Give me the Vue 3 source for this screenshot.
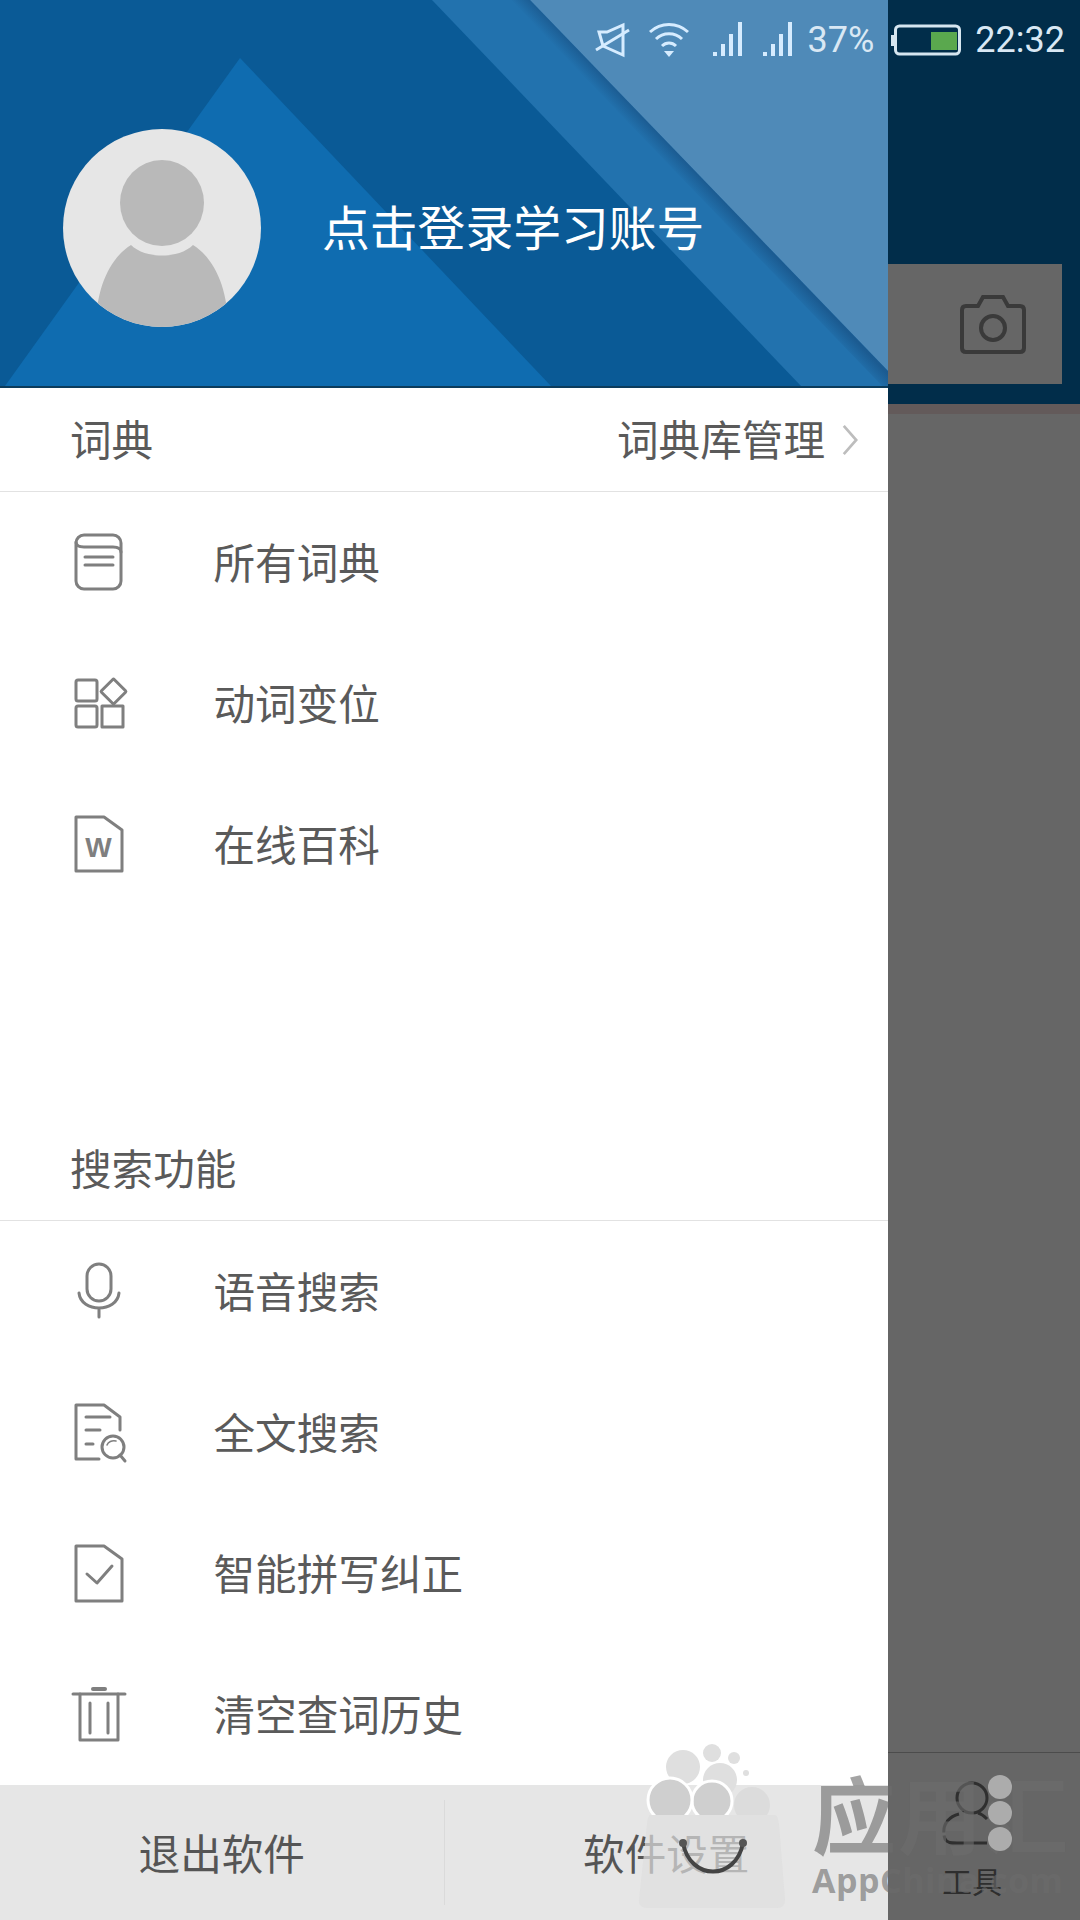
<script setup>
const dict = [
  { label: '所有词典', icon: 'book' },
  { label: '动词变位', icon: 'grid' },
  { label: '在线百科', icon: 'wiki' }
]
const search = [
  { label: '语音搜索', icon: 'mic' },
  { label: '全文搜索', icon: 'find' },
  { label: '智能拼写纠正', icon: 'check' },
  { label: '清空查词历史', icon: 'trash' }
]
</script>

<template>
  <div class="page">
    <aside class="drawer">
      <header class="hero">
        <svg class="hero-art" viewBox="0 0 888 386" width="888" height="386">
          <defs>
            <linearGradient id="shade" gradientUnits="userSpaceOnUse" x1="700.6" y1="177" x2="689" y2="188">
              <stop offset="0" stop-color="#1a578c" stop-opacity=".85" />
              <stop offset="1" stop-color="#1a578c" stop-opacity="0" />
            </linearGradient>
          </defs>
          <rect width="888" height="386" fill="#0a5a96" />
          <polygon points="240,58 551,386 5,386" fill="#0f6cb0" />
          <polygon points="432,0 888,0 888,386 801,386" fill="#2272ae" />
          <polygon points="530,0 888,0 888,371" fill="#4f8ab8" />
          <polygon points="530,0 888,371 888,392 510,0" fill="url(#shade)" />
        </svg>
        <div class="avatar">
          <svg viewBox="0 0 198 198" width="198" height="198">
            <defs><clipPath id="disc"><circle cx="99" cy="99" r="99" /></clipPath></defs>
            <circle cx="99" cy="99" r="99" fill="#e6e6e6" />
            <g clip-path="url(#disc)">
              <ellipse cx="99" cy="74" rx="42" ry="43" fill="#b9b9b9" />
              <path d="M33 198 C33 160 46 130 68 116 C82 130 116 130 130 116 C152 130 165 160 165 198 Z" fill="#b9b9b9" />
            </g>
          </svg>
        </div>
        <span class="login">点击登录学习账号</span>
      </header>

      <div class="section-head">
        <span class="lift">词典</span>
        <span class="manage"><span class="lift">词典库管理</span>
          <svg viewBox="0 0 20 36" width="18" height="32"><path d="M3 2 L17 18 L3 34" fill="none" stroke="#bdbdbd" stroke-width="3" /></svg>
        </span>
      </div>
      <ul class="list">
        <li v-for="item in dict" :key="item.label" class="row">
          <svg class="ico" viewBox="0 0 60 60" width="60" height="60">
            <g v-if="item.icon === 'book'">
              <rect x="6" y="2" width="45" height="54" rx="8" />
              <path d="M6 9 C6 13 10 14 14 14 H43 C47 14 51 15 51 19" />
              <path d="M15 24 H43 M15 32 H43" />
            </g>
            <g v-else-if="item.icon === 'grid'">
              <rect x="6" y="6" width="21" height="21" rx="2" />
              <rect x="6" y="32" width="21" height="21" rx="2" />
              <rect x="32" y="32" width="21" height="21" />
              <rect x="34.5" y="8.5" width="18" height="18" transform="rotate(45 43.5 17.5)" rx="1" />
            </g>
            <g v-else>
              <path d="M6 2 H34 L52 15 V56 H6 Z" />
              <text class="ico-w" x="28.5" y="42" text-anchor="middle">W</text>
            </g>
          </svg>
          <span class="lift">{{ item.label }}</span>
        </li>
      </ul>

      <div class="section-head second"><span class="lift">搜索功能</span></div>
      <ul class="list">
        <li v-for="item in search" :key="item.label" class="row">
          <svg class="ico" viewBox="0 0 60 60" width="60" height="60">
            <g v-if="item.icon === 'mic'">
              <rect x="17" y="2" width="24" height="37" rx="12" />
              <path d="M9 31 C11 51 47 51 49 31 M29 46 V55" />
            </g>
            <g v-else-if="item.icon === 'find'">
              <path d="M29 56 H6 V2 H34 L50 14 V27" />
              <path d="M16 14 H40 M16 27 H30 M16 41 H23" />
              <circle cx="43" cy="44" r="11" />
              <path d="M37 42 C38 39 42 37 46 38" stroke-width="1.5" />
              <path d="M50 52 L55 58" />
            </g>
            <g v-else-if="item.icon === 'check'">
              <path d="M6 2 H34 L52 15 V57 H6 Z" />
              <path d="M17 30 L27 39 L42 22" />
            </g>
            <g v-else>
              <path d="M3 9 H55" />
              <path d="M23 4 H35" stroke-width="4" />
              <path d="M10 9 V55 H48 V9 M20 18 V48 M38 18 V48" />
            </g>
          </svg>
          <span class="lift">{{ item.label }}</span>
        </li>
      </ul>

      <footer class="actions">
        <button class="action">退出软件</button>
        <i class="split"></i>
        <button class="action">软件设置</button>
      </footer>
    </aside>

    <div class="scrim">
      <div class="backdrop-bar">
        <div class="camera">
          <svg viewBox="0 0 66 64" width="66" height="64" fill="none" stroke="#3a3a3a" stroke-width="4">
            <path d="M6 14 H18 L23 5 H43 L48 14 H60 Q64 14 64 18 V56 Q64 60 60 60 H6 Q2 60 2 56 V18 Q2 14 6 14 Z" />
            <circle cx="33" cy="36" r="12" />
          </svg>
        </div>
      </div>
      <div class="backdrop-fill"></div>
      <nav class="tab">
        <svg viewBox="0 0 70 70" width="70" height="70" fill="none" stroke="#2f2f2f" stroke-width="3">
          <circle cx="35" cy="15" r="15" />
          <path d="M22 31 C10 34 4 44 8 56 C10 60 14 60 20 60" stroke-dasharray="26 3" />
          <path d="M20 60 L50 60" />
          <path d="M41 30 C45 31 48 34 50 36" />
        </svg>
        <span>工具</span>
      </nav>
    </div>

    <div class="status">
      <svg viewBox="0 0 36 36" width="36" height="36" fill="none" stroke="#d6ecff" stroke-width="3">
        <path d="M4 10 H12 L28 3 V33 L8 24 Z" />
        <path d="M1 28 L34 8" />
      </svg>
      <svg class="wifi" viewBox="0 0 42 36" width="42" height="36" fill="none" stroke="#d6ecff" stroke-width="3">
        <path d="M2 10 C13 0 29 0 40 10 M8 17 C15 10 27 10 34 17 M14 24 C18 20 24 20 28 24" />
        <path d="M21 35 L16 29 H26 Z" fill="#d6ecff" stroke="none" />
      </svg>
      <svg class="sig" viewBox="0 0 30 36" width="30" height="36" fill="#d6ecff">
        <rect x="0" y="30" width="4" height="4" /><rect x="8" y="22" width="4" height="12" /><rect x="16" y="12" width="4" height="22" /><rect x="25" y="0" width="4" height="34" />
      </svg>
      <svg class="sig two" viewBox="0 0 30 36" width="30" height="36" fill="#d6ecff">
        <rect x="0" y="30" width="4" height="4" /><rect x="8" y="22" width="4" height="12" /><rect x="16" y="12" width="4" height="22" /><rect x="25" y="0" width="4" height="34" />
      </svg>
      <span class="pct">37%</span>
      <svg class="batt" viewBox="0 0 70 32" width="70" height="32">
        <rect x="0" y="11" width="3" height="11" fill="#d6e6f0" />
        <rect x="4.5" y="2" width="64" height="28" rx="4" fill="none" stroke="#d6e6f0" stroke-width="3" />
        <rect x="40" y="8" width="26" height="18" fill="#5aa84e" />
      </svg>
      <span class="clock">22:32</span>
    </div>

    <div class="watermark">
      <svg class="bag" viewBox="0 0 160 190" width="160" height="190">
        <g fill="#dfdfdf">
          <circle cx="51" cy="37" r="17" />
          <circle cx="80" cy="23" r="9" />
          <circle cx="102" cy="28" r="6" />
          <circle cx="114" cy="43" r="3" />
          <circle cx="88" cy="50" r="17" />
        </g>
        <defs><clipPath id="above"><rect x="0" y="0" width="160" height="85" /></clipPath></defs>
        <g clip-path="url(#above)" stroke="#fff" stroke-width="3">
          <circle cx="120" cy="75" r="18" fill="#dcdcdc" stroke="none" />
          <circle cx="80" cy="71" r="20" fill="#cfcfcf" />
          <circle cx="38" cy="70" r="22" fill="#cfcfcf" />
        </g>
        <path d="M18 85 H143 Q146 85 147 95 L153 170 Q153 178 145 178 H16 Q6 178 7 170 L15 95 Q16 85 18 85 Z" fill="#dedede" opacity=".7" />
        <path d="M51 113 C58 151 104 151 111 113" fill="none" stroke="#444" stroke-width="4" />
        <circle cx="51" cy="113" r="4" fill="#555" />
        <circle cx="111" cy="113" r="4" fill="#555" />
      </svg>
      <div class="brand">
        <span class="brand-cn">应用汇</span>
        <span class="brand-en">AppChina.com</span>
      </div>
      <div class="dots"><i></i><i></i><i></i></div>
    </div>
  </div>
</template>

<style scoped>
.page {
  position: relative;
  width: 1080px;
  height: 1920px;
  display: flex;
  overflow: hidden;
  font-family: "Noto Sans CJK SC", "Liberation Sans", sans-serif;
  color: #5a5a5a;
}
.drawer {
  width: 888px;
  height: 1920px;
  display: flex;
  flex-direction: column;
  background: #fff;
}
.hero {
  position: relative;
  flex: none;
  display: flex;
  align-items: center;
  padding-left: 63px;
  box-sizing: border-box;
  border-bottom: 2px solid #0c3c5c;
  height: 388px;
}
.hero-art {
  position: absolute;
  left: 0;
  top: 0;
}
.avatar {
  position: relative;
  width: 198px;
  height: 198px;
  margin-top: 70px;
  flex: none;
}
.avatar svg { display: block; }
.login {
  position: relative;
  margin-left: 61px;
  margin-top: 66px;
  font-size: 47.8px;
  color: #fff;
  line-height: 1;
}
.section-head {
  height: 103px;
  flex: none;
  display: flex;
  align-items: center;
  justify-content: space-between;
  padding: 0 29px 0 70px;
  border-bottom: 1px solid #e2e2e2;
  font-size: 41.6px;
  line-height: 1;
}
.lift {
  margin-top: -1px;
}
.second {
  margin-top: 201px;
  height: 104px;
}
.manage {
  display: flex;
  align-items: center;
  gap: 16px;
}
.list {
  list-style: none;
  margin: 0;
  padding: 0;
}
.row {
  height: 141px;
  display: flex;
  align-items: center;
  padding-left: 70px;
  font-size: 41.6px;
  line-height: 1;
}
.ico {
  flex: none;
  margin-right: 83.5px;
  fill: none;
  stroke: #7f7f7f;
  stroke-width: 3;
  stroke-linejoin: round;
  stroke-linecap: round;
  overflow: visible;
}
.ico-w {
  fill: #7f7f7f;
  stroke: none;
  font-family: "Liberation Sans", sans-serif;
  font-size: 28px;
  font-weight: 700;
}
.actions {
  height: 135px;
  flex: none;
  display: flex;
  align-items: center;
  background: #e6e6e6;
}
.action {
  flex: 1;
  height: 135px;
  border: 0;
  padding: 0 0 2px;
  background: none;
  font: inherit;
  font-size: 41.6px;
  color: #555;
}
.split {
  width: 1px;
  height: 105px;
  background: #dadada;
}
.scrim {
  flex: 1;
  display: flex;
  flex-direction: column;
  background: #666;
}
.backdrop-bar {
  height: 404px;
  flex: none;
  background: #012d4a;
  padding-top: 264px;
  box-sizing: border-box;
}
.camera {
  width: 174px;
  height: 120px;
  background: #666;
  display: flex;
  align-items: center;
  justify-content: center;
  padding-left: 36px;
  box-sizing: border-box;
}
.backdrop-fill {
  flex: 1;
  border-top: 10px solid #635a5a;
  border-bottom: 1px solid #4c4c4c;
}
.tab {
  height: 167px;
  flex: none;
  display: flex;
  flex-direction: column;
  align-items: center;
  padding-top: 30px;
  padding-right: 24px;
  box-sizing: border-box;
  color: #2e2e2e;
  font-size: 30px;
  line-height: 1;
  gap: 12px;
}
.tab svg {
  overflow: visible;
}
.status {
  position: absolute;
  top: 22px;
  right: 15px;
  height: 36px;
  display: flex;
  align-items: center;
  color: #d9e8f4;
  font-family: Roboto, "Liberation Sans", sans-serif;
  font-size: 36px;
  line-height: 36px;
}
.status svg { flex: none; }
.wifi { margin-left: 17px; }
.sig { margin-left: 23px; }
.sig.two { margin-left: 20px; }
.pct { margin-left: 15px; }
.batt { margin-left: 17px; }
.clock { margin-left: 14px; }
.watermark {
  position: absolute;
  left: 632px;
  top: 1730px;
  width: 448px;
  height: 190px;
  pointer-events: none;
}
.bag {
  position: absolute;
  left: 0;
  top: 0;
}
.brand {
  position: absolute;
  left: 180px;
  top: 34px;
  display: flex;
  flex-direction: column;
  color: rgba(108, 108, 108, .62);
  font-weight: 700;
  white-space: nowrap;
}
.brand-cn {
  font-size: 84px;
  line-height: 96px;
  letter-spacing: 2px;
}
.brand-en {
  font-family: "Open Sans", "Liberation Sans", sans-serif;
  font-size: 34px;
  line-height: 40px;
  letter-spacing: .5px;
}
.dots {
  position: absolute;
  left: 356px;
  top: 45px;
  display: flex;
  flex-direction: column;
  gap: 2px;
}
.dots i {
  display: block;
  width: 24px;
  height: 24px;
  border-radius: 50%;
  background: #acacac;
}
</style>
